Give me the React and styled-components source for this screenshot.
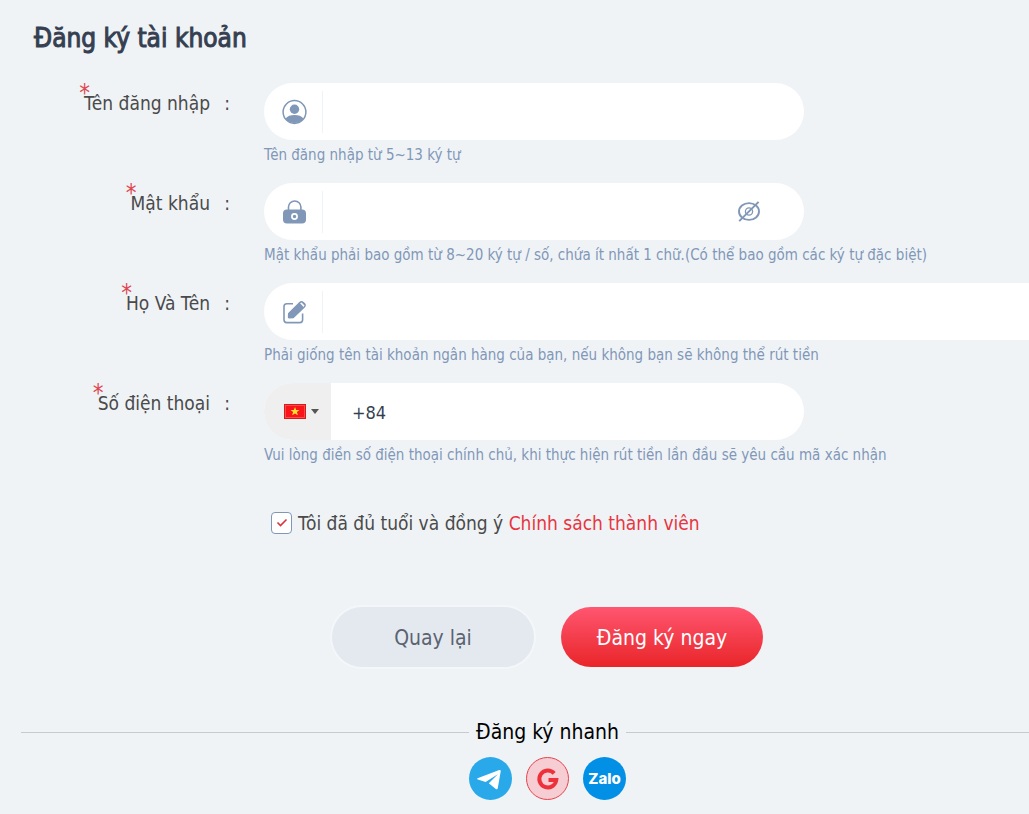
import React, { useState } from "react";
import styled, { createGlobalStyle } from "styled-components";

const GlobalStyle = createGlobalStyle`
  * {
    box-sizing: border-box;
  }
  body {
    margin: 0;
    background: #eff3f6;
    font-family: Tahoma, "DejaVu Sans Condensed", "Noto Sans", sans-serif;
    color: #4a4a4a;
  }
  button,
  input {
    font-family: inherit;
  }
`;

const Page = styled.main`
  min-height: 100vh;
  padding-left: 21px;
  overflow: hidden;
`;

const Panel = styled.div`
  margin-right: -45px;
`;

const Title = styled.h1`
  margin: 0;
  padding: 20px 13px 27px;
  font-size: 26px;
  line-height: 36px;
  font-weight: 400;
  -webkit-text-stroke: 1px #363f51;
  color: #363f51;
`;

const Row = styled.div`
  display: grid;
  grid-template-columns: 209px 1fr;
  column-gap: 34px;
  min-height: 100px;
`;

const Label = styled.label`
  display: flex;
  justify-content: flex-end;
  padding-top: 8px;
  font-size: 19px;
  line-height: 24px;
  white-space: nowrap;
`;

const Required = styled.span`
  align-self: flex-start;
  margin: -10px -6px 0 0;
  font-size: 24px;
  color: #e0464f;
`;

const Colon = styled.span`
  width: 20px;
  text-align: right;
`;

const Field = styled.div`
  display: flex;
  align-items: center;
  width: ${(props) => (props.$wide ? "100%" : "540px")};
  height: 57px;
  border-radius: 29px;
  background: white;
  overflow: hidden;
`;

const FieldIcon = styled.span`
  display: flex;
  justify-content: center;
  align-items: center;
  width: 59px;
  height: 42px;
  padding-left: 3px;
  border-right: 1px solid #f0f3f6;
  color: #8197b8;
`;

const Input = styled.input`
  flex: 1;
  min-width: 0;
  height: 100%;
  padding: 2px 21px 0;
  border: none;
  outline: none;
  background: transparent;
  font-size: 18px;
  color: #363f51;
`;

const EyeButton = styled.button`
  display: flex;
  margin-right: 43px;
  padding: 0;
  border: none;
  background: none;
  color: #8197b8;
  cursor: pointer;
`;

const Country = styled.button`
  display: flex;
  align-items: center;
  gap: 5px;
  width: 67px;
  height: 100%;
  padding: 0 0 0 20px;
  border: none;
  background: #efefef;
  cursor: pointer;
`;

const Hint = styled.p`
  margin: 0;
  padding-top: 5px;
  font-size: 15px;
  line-height: 20px;
  color: #8197b8;
  white-space: nowrap;
`;

const Agreement = styled.div`
  display: flex;
  align-items: center;
  gap: 6px;
  padding: 28px 0 0 250px;
  font-size: 19px;
  line-height: 24px;
  white-space: nowrap;
`;

const CheckWrap = styled.span`
  display: grid;
  place-items: center;
  width: 21px;
  height: 22px;
  > * {
    grid-area: 1 / 1;
  }
  svg {
    pointer-events: none;
  }
`;

const Checkbox = styled.input`
  appearance: none;
  width: 100%;
  height: 100%;
  margin: 0;
  border: 1px solid #8197b8;
  border-radius: 4px;
  background: white;
  cursor: pointer;
`;

const PolicyLink = styled.a`
  color: #e8353f;
  text-decoration: none;
`;

const Actions = styled.div`
  display: flex;
  justify-content: center;
  gap: 27px;
  padding-top: 72px;
`;

const Button = styled.button`
  width: 202px;
  height: 60px;
  padding-top: 3px;
  border: none;
  border-radius: 30px;
  font-size: 21px;
  color: ${(props) => (props.$primary ? "white" : "#5b6370")};
  background: ${(props) =>
    props.$primary ? "linear-gradient(#ff5670, #e92529)" : "#e4e9f0"};
  box-shadow: ${(props) => (props.$primary ? "none" : "0 0 0 2px #f4f7fa")};
  cursor: pointer;
`;

const Divider = styled.h2`
  display: flex;
  align-items: center;
  gap: 7px;
  margin: 0;
  padding-top: 50px;
  font-size: 21px;
  line-height: 30px;
  font-weight: 400;
  color: black;
  &::before,
  &::after {
    content: "";
    flex: 1;
    height: 1px;
    background: #c6cbd0;
  }
`;

const Socials = styled.div`
  display: flex;
  justify-content: center;
  gap: 14px;
  padding: 10px 0 14px;
`;

const Social = styled.button`
  display: flex;
  justify-content: center;
  align-items: center;
  width: 43px;
  height: 43px;
  padding: 0;
  border: ${(props) => props.$border || "none"};
  border-radius: 50%;
  background: ${(props) => props.$bg};
  font-family: Inter, sans-serif;
  font-size: 15px;
  font-weight: 800;
  color: white;
  cursor: pointer;
`;

const UserIcon = () => (
  <svg width="26" height="26" viewBox="0 0 26 26" fill="currentColor">
    <circle cx="12.500" cy="13" r="11.400" fill="none" stroke="currentColor" strokeWidth="1.500" />
    <circle cx="12.500" cy="10.200" r="4.700" />
    <path d="M3.500 19.500C5.500 17 8.500 16 12.500 16s7 1 9 3.500a11.300 11.300 0 0 1-18 0z" />
  </svg>
);

const LockIcon = () => (
  <svg width="26" height="26" viewBox="0 0 26 26">
    <path
      d="M6.500 12V8a6.200 6 0 0 1 12.400 0v4"
      fill="none"
      stroke="currentColor"
      strokeWidth="1.600"
    />
    <rect x="1" y="10.500" width="23" height="14" rx="4" fill="currentColor" />
    <circle cx="12.500" cy="17.500" r="2.600" fill="none" stroke="white" strokeWidth="1.700" />
  </svg>
);

const EditIcon = () => (
  <svg width="26" height="26" viewBox="0 0 26 26">
    <path
      d="M11 4.700H4.800A2.800 2.800 0 0 0 2 7.500v13.300a2.800 2.800 0 0 0 2.800 2.800h13a2.800 2.800 0 0 0 2.800-2.800V14.500"
      fill="none"
      stroke="currentColor"
      strokeWidth="1.600"
    />
    <path
      d="M6 14.200 17.300 3a3.100 3.100 0 0 1 4.400 0l1.100 1.100a3 3 0 0 1 0 4.300L11.500 19.200l-4.300.300a1.300 1.300 0 0 1-1.400-1.400z"
      fill="currentColor"
    />
    <path d="m18.100 4.300 1.400-.700 3 3-.900 1.300z" fill="white" />
  </svg>
);

const EyeOffIcon = () => (
  <svg width="24" height="22" viewBox="0 0 24 22" fill="none" stroke="currentColor">
    <ellipse cx="12" cy="10.500" rx="10" ry="8.400" strokeWidth="1.900" />
    <circle cx="12" cy="10.500" r="3.600" strokeWidth="1.300" />
    <path d="M2.200 20.100 21.600.900" strokeWidth="2" />
  </svg>
);

const Flag = () => (
  <svg width="22" height="15" viewBox="0 0 22 15">
    <rect width="22" height="15" fill="#d51a1d" />
    <rect x="1" y="1" width="20" height="13" fill="#ff4a4a" />
    <rect x="2" y="2" width="18" height="11" fill="#f81419" />
    <path
      d="m11 3 1.200 3.100h3.300l-2.600 2 1 3.200L11 9.400l-2.900 1.900 1-3.200-2.600-2h3.300z"
      fill="#ffdd31"
    />
  </svg>
);

const Caret = () => (
  <svg width="8" height="5" viewBox="0 0 8 5">
    <path d="M0 0h8L4 5z" fill="#555" />
  </svg>
);

const TelegramIcon = () => (
  <svg width="43" height="43" viewBox="0 0 43 43">
    <path
      d="M8.600 21.300 30.200 13c1-.400 1.700.200 1.500 1.400L28.800 31c-.200 1.200-1 1.500-2 .900l-7-5.600 9-9-12.200 7.700-7.800-2.500c-.800-.300-.900-.900-.200-1.200z"
      fill="white"
    />
  </svg>
);

const GoogleIcon = () => (
  <svg width="24" height="24" viewBox="0 0 24 24">
    <path
      d="M18.200 6.300A8.500 8.500 0 1 0 20.300 12.900H12.500"
      fill="none"
      stroke="#ee303b"
      strokeWidth="4"
    />
  </svg>
);

const FormRow = ({ id, label, hint, wide, children }) => (
  <Row>
    <Label htmlFor={id}>
      <Required>*</Required>
      {label}
      <Colon>:</Colon>
    </Label>
    <div>
      <Field $wide={wide}>{children}</Field>
      <Hint>{hint}</Hint>
    </div>
  </Row>
);

export default function App() {
  const [agreed, setAgreed] = useState(true);
  const [showPassword, setShowPassword] = useState(false);
  const [phone, setPhone] = useState("+84");

  return (
    <>
      <GlobalStyle />
      <Page>
        <Panel>
          <Title>Đăng ký tài khoản</Title>
          <form onSubmit={(e) => e.preventDefault()}>
            <FormRow
              id="username"
              label="Tên đăng nhập"
              hint="Tên đăng nhập từ 5~13 ký tự"
            >
              <FieldIcon>
                <UserIcon />
              </FieldIcon>
              <Input id="username" type="text" />
            </FormRow>
            <FormRow
              id="password"
              label="Mật khẩu"
              hint="Mật khẩu phải bao gồm từ 8~20 ký tự / số, chứa ít nhất 1 chữ.(Có thể bao gồm các ký tự đặc biệt)"
            >
              <FieldIcon>
                <LockIcon />
              </FieldIcon>
              <Input id="password" type={showPassword ? "text" : "password"} />
              <EyeButton
                type="button"
                aria-label="Hiện mật khẩu"
                onClick={() => setShowPassword((prev) => !prev)}
              >
                <EyeOffIcon />
              </EyeButton>
            </FormRow>
            <FormRow
              id="fullname"
              label="Họ Và Tên"
              hint="Phải giống tên tài khoản ngân hàng của bạn, nếu không bạn sẽ không thể rút tiền"
              wide
            >
              <FieldIcon>
                <EditIcon />
              </FieldIcon>
              <Input id="fullname" type="text" />
            </FormRow>
            <FormRow
              id="phone"
              label="Số điện thoại"
              hint="Vui lòng điền số điện thoại chính chủ, khi thực hiện rút tiền lần đầu sẽ yêu cầu mã xác nhận"
            >
              <Country type="button" aria-label="Việt Nam">
                <Flag />
                <Caret />
              </Country>
              <Input
                id="phone"
                type="tel"
                value={phone}
                onChange={(e) => setPhone(e.target.value)}
              />
            </FormRow>
            <Agreement>
              <CheckWrap>
                <Checkbox
                  id="agree"
                  type="checkbox"
                  checked={agreed}
                  onChange={() => setAgreed((prev) => !prev)}
                />
                {agreed && (
                  <svg width="12" height="10" viewBox="0 0 12 10">
                    <path d="m1.500 4.500 3 3 6-6" fill="none" stroke="#d9343e" strokeWidth="1.600" />
                  </svg>
                )}
              </CheckWrap>
              <span>
                <label htmlFor="agree">Tôi đã đủ tuổi và đồng ý</label>{" "}
                <PolicyLink href="#policy">Chính sách thành viên</PolicyLink>
              </span>
            </Agreement>
            <Actions>
              <Button type="button">Quay lại</Button>
              <Button type="submit" $primary>
                Đăng ký ngay
              </Button>
            </Actions>
          </form>
          <Divider>Đăng ký nhanh</Divider>
          <Socials>
            <Social $bg="#29a9ea" aria-label="Telegram">
              <TelegramIcon />
            </Social>
            <Social $bg="#f6cdd3" $border="1px solid #e7434c" aria-label="Google">
              <GoogleIcon />
            </Social>
            <Social $bg="#0190e6">Zalo</Social>
          </Socials>
        </Panel>
      </Page>
    </>
  );
}
